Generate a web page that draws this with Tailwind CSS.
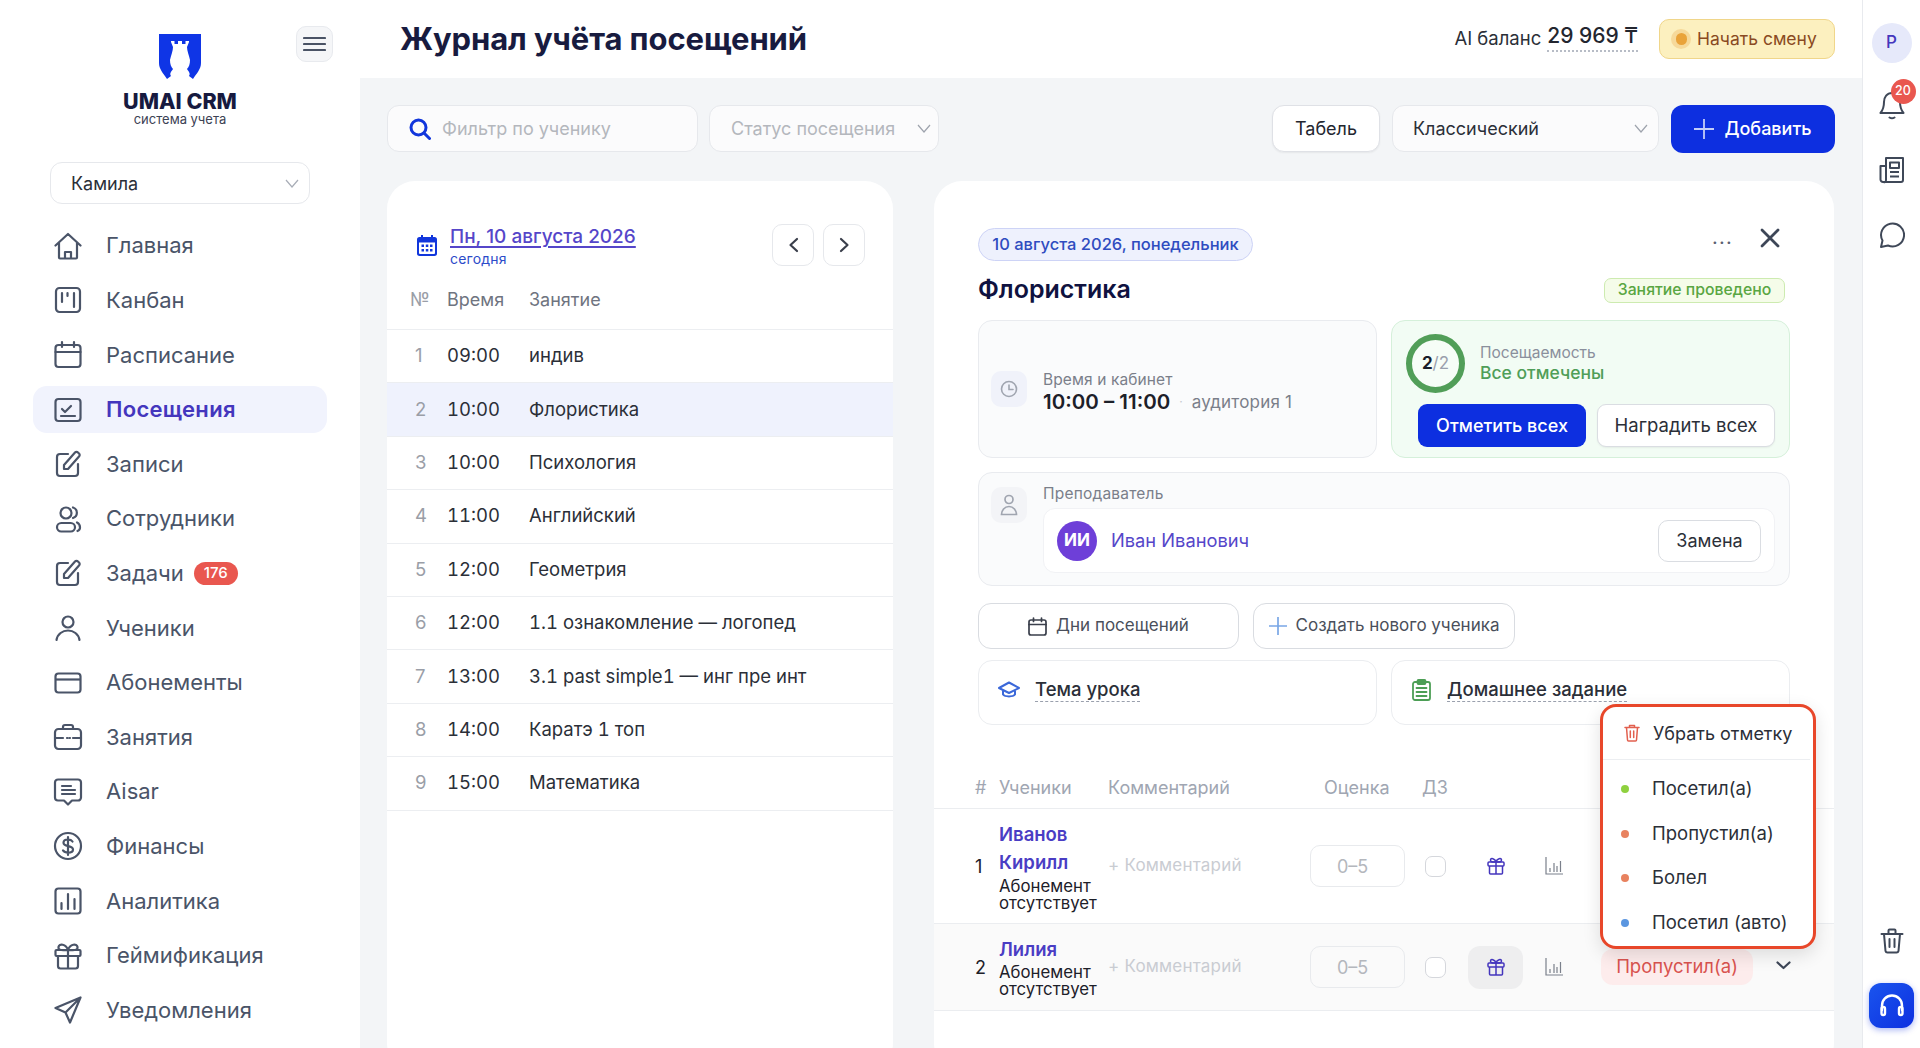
<!DOCTYPE html>
<html lang="ru">
<head>
<meta charset="utf-8">
<title>Журнал учёта посещений</title>
<script src="https://cdn.jsdelivr.net/npm/@tailwindcss/browser@4"></script>
</head>
<body class="font-[Inter,sans-serif] text-[#1f2430] bg-white">
<div class="flex w-[1920px] h-[1048px] overflow-hidden relative">

  <!-- SIDEBAR -->
  <aside class="w-[360px] shrink-0 bg-white relative">
    <div class="h-[162px] relative">
      <button class="absolute left-[296px] top-[26px] w-[37px] h-[36px] rounded-[10px] border border-[#e8eaee] bg-[#f5f6f8] flex items-center justify-center">
        <svg width="23" height="16" viewBox="0 0 23 16" fill="none" stroke="#4a5365" stroke-width="2.2" stroke-linecap="round"><path d="M1 2h21M1 8h21M1 14h21"/></svg>
      </button>
      <div class="flex flex-col items-center pt-[34px]">
        <svg width="44" height="46" viewBox="0 0 44 46">
          <path fill="#0f35e6" d="M1 0H43V29C43 35 39 39 35 45L31 42C33 39 30 37 29 35C31 33 32 30 32 26C31 21 29 17 29 13L31 8V7H27.500V10H24V7H20V10H16.500V7H13V8L15 13C15 17 13 21 12 26C12 30 13 33 15 35C14 37 11 39 13 42L9 45C5 39 1 35 1 29Z"/>
        </svg>
        <div class="text-[21.500px] leading-[20px] font-extrabold text-[#171a3f] mt-[11px]">UMAI CRM</div>
        <div class="text-[13px] leading-[14px] text-[#3c4254] mt-[1px]">система учета</div>
      </div>
    </div>

    <div class="mx-[50px] h-[42px] rounded-[12px] border border-[#e6e8ec] flex items-center justify-between pl-[20px] pr-[10px] text-[18px] text-[#2b2f38]">
      <span>Камила</span>
      <svg width="14" height="9" viewBox="0 0 14 9" fill="none" stroke="#a8adb7" stroke-width="1.200"><path d="M1 1l6 7 6-7"/></svg>
    </div>

    <nav class="mt-[14.600px] px-[33px] flex flex-col text-[22px] text-[#4a5468]">
      <a class="h-[54.600px] flex items-center gap-[23px] pl-[20px]">
        <svg class="w-[30px] h-[30px] shrink-0" viewBox="0 0 30 30" fill="none" stroke="#4a5468" stroke-width="2.200" stroke-linejoin="round" stroke-linecap="round"><path d="M2.500 14.500 15 3l12.500 11.500M6 12v14.500a1 1 0 0 0 1 1h16a1 1 0 0 0 1-1V12M12 27v-6h6v6"/></svg>
        <span>Главная</span>
      </a>
      <a class="h-[54.600px] flex items-center gap-[23px] pl-[20px]">
        <svg class="w-[30px] h-[30px] shrink-0" viewBox="0 0 30 30" fill="none" stroke="#4a5468" stroke-width="2.200" stroke-linecap="round"><rect x="3" y="3" width="24" height="24" rx="3.500"/><path d="M9 8v9M14.500 8v3M21 8v14"/></svg>
        <span>Канбан</span>
      </a>
      <a class="h-[54.600px] flex items-center gap-[23px] pl-[20px]">
        <svg class="w-[30px] h-[30px] shrink-0" viewBox="0 0 30 30" fill="none" stroke="#4a5468" stroke-width="2.200" stroke-linecap="round"><rect x="2.500" y="5" width="25" height="22" rx="3"/><path d="M2.500 12h25M9 2v5M21 2v5"/></svg>
        <span>Расписание</span>
      </a>
      <a class="h-[47px] my-[3.800px] flex items-center gap-[23px] pl-[20px] rounded-[14px] bg-[#f1f3fd] text-[#4436bd] font-semibold tracking-[0.3px]">
        <svg class="w-[30px] h-[30px] shrink-0" viewBox="0 0 30 30" fill="none" stroke="#4a5468" stroke-width="2.200" stroke-linecap="round" stroke-linejoin="round"><rect x="2.500" y="4" width="25" height="22" rx="3"/><path d="M9 14l3 3 6-6M8 21h14"/></svg>
        <span>Посещения</span>
      </a>
      <a class="h-[54.600px] flex items-center gap-[23px] pl-[20px]">
        <svg class="w-[30px] h-[30px] shrink-0" viewBox="0 0 30 30" fill="none" stroke="#4a5468" stroke-width="2.200" stroke-linecap="round" stroke-linejoin="round"><path d="M15 5H7a3 3 0 0 0-3 3v16a3 3 0 0 0 3 3h15a3 3 0 0 0 3-3v-9"/><path d="M11 20v-4L22 3.500a2 2 0 0 1 3 0l1 1a2 2 0 0 1 0 3L15 20z"/></svg>
        <span>Записи</span>
      </a>
      <a class="h-[54.600px] flex items-center gap-[23px] pl-[20px]">
        <svg class="w-[30px] h-[30px] shrink-0" viewBox="0 0 30 30" fill="none" stroke="#4a5468" stroke-width="2.200" stroke-linecap="round"><circle cx="13" cy="9" r="5.500"/><rect x="4" y="19" width="18" height="8.500" rx="4.250"/><path d="M20 3.500a5.500 5.500 0 0 1 0 10.500M24 18.500c2 1 3 3 3 5s-1 3-2.500 3.500"/></svg>
        <span>Сотрудники</span>
      </a>
      <a class="h-[54.600px] flex items-center gap-[23px] pl-[20px]">
        <svg class="w-[30px] h-[30px] shrink-0" viewBox="0 0 30 30" fill="none" stroke="#4a5468" stroke-width="2.200" stroke-linecap="round" stroke-linejoin="round"><path d="M15 5H7a3 3 0 0 0-3 3v16a3 3 0 0 0 3 3h15a3 3 0 0 0 3-3v-9"/><path d="M11 20v-4L22 3.500a2 2 0 0 1 3 0l1 1a2 2 0 0 1 0 3L15 20z"/></svg>
        <span>Задачи</span>
        <span class="-ml-[13px] h-[23px] w-[44px] rounded-full bg-[#e9574f] text-white text-[15px] font-medium flex items-center justify-center">176</span>
      </a>
      <a class="h-[54.600px] flex items-center gap-[23px] pl-[20px]">
        <svg class="w-[30px] h-[30px] shrink-0" viewBox="0 0 30 30" fill="none" stroke="#4a5468" stroke-width="2.200" stroke-linecap="round"><circle cx="15" cy="9" r="5.500"/><path d="M3.500 27c1-6 6-9.500 11.500-9.500S25.500 21 26.500 27"/></svg>
        <span>Ученики</span>
      </a>
      <a class="h-[54.600px] flex items-center gap-[23px] pl-[20px]">
        <svg class="w-[30px] h-[30px] shrink-0" viewBox="0 0 30 30" fill="none" stroke="#4a5468" stroke-width="2.200"><rect x="2.500" y="5.500" width="25" height="19" rx="3"/><path d="M2.500 11.500h25"/></svg>
        <span>Абонементы</span>
      </a>
      <a class="h-[54.600px] flex items-center gap-[23px] pl-[20px]">
        <svg class="w-[30px] h-[30px] shrink-0" viewBox="0 0 30 30" fill="none" stroke="#4a5468" stroke-width="2.200" stroke-linecap="round"><rect x="2" y="7" width="26" height="20" rx="3.500"/><path d="M10 7V5a2 2 0 0 1 2-2h6a2 2 0 0 1 2 2v2M2 16h8M20 16h8M14 16h.5M16.500 16h.5"/></svg>
        <span>Занятия</span>
      </a>
      <a class="h-[54.600px] flex items-center gap-[23px] pl-[20px]">
        <svg class="w-[30px] h-[30px] shrink-0" viewBox="0 0 30 30" fill="none" stroke="#4a5468" stroke-width="2.200" stroke-linecap="round" stroke-linejoin="round"><path d="M5 2.500h20a3 3 0 0 1 3 3v15a3 3 0 0 1-3 3h-6l-4 4-4-4H5a3 3 0 0 1-3-3v-15a3 3 0 0 1 3-3z"/><path d="M9 9h9M9 13h13M9 17h13"/></svg>
        <span>Aisar</span>
      </a>
      <a class="h-[54.600px] flex items-center gap-[23px] pl-[20px]">
        <svg class="w-[30px] h-[30px] shrink-0" viewBox="0 0 30 30" fill="none" stroke="#4a5468" stroke-width="2.200" stroke-linecap="round"><circle cx="15" cy="15" r="13"/><path d="M19.500 10.500c-1-1.500-2.500-2-4.500-2-2.500 0-4.500 1.300-4.500 3.300 0 4.700 9.500 2 9.500 6.700 0 2-2 3.200-5 3.200-2.300 0-4-.8-5-2.300M15 6v18"/></svg>
        <span>Финансы</span>
      </a>
      <a class="h-[54.600px] flex items-center gap-[23px] pl-[20px]">
        <svg class="w-[30px] h-[30px] shrink-0" viewBox="0 0 30 30" fill="none" stroke="#4a5468" stroke-width="2.200" stroke-linecap="round"><rect x="2.500" y="2.500" width="25" height="25" rx="3"/><path d="M8.500 17v6M15 8v15M21.500 13v10"/></svg>
        <span>Аналитика</span>
      </a>
      <a class="h-[54.600px] flex items-center gap-[23px] pl-[20px]">
        <svg class="w-[30px] h-[30px] shrink-0" viewBox="0 0 30 30" fill="none" stroke="#4a5468" stroke-width="2.200" stroke-linecap="round" stroke-linejoin="round"><rect x="2.500" y="9" width="25" height="6" rx="1"/><path d="M5 15v10a2.500 2.500 0 0 0 2.500 2.500h15A2.500 2.500 0 0 0 25 25V15M15 9v18.500M15 9c-2-6-9-7-9.500-3S9 9 15 9zM15 9c2-6 9-7 9.500-3S21 9 15 9z"/></svg>
        <span>Геймификация</span>
      </a>
      <a class="h-[54.600px] flex items-center gap-[23px] pl-[20px]">
        <svg class="w-[30px] h-[30px] shrink-0" viewBox="0 0 30 30" fill="none" stroke="#4a5468" stroke-width="2.200" stroke-linecap="round" stroke-linejoin="round"><path d="M27.500 2.500 2.500 13l10 4.500 4.500 10zM12.500 17.500l15-15"/></svg>
        <span>Уведомления</span>
      </a>
    </nav>
  </aside>

  <!-- MAIN -->
  <main class="flex-1 flex flex-col min-w-0 bg-[#f3f5f7]">
    <header class="h-[78px] shrink-0 bg-white flex items-center justify-between pl-[40px] pr-[27px]">
      <h1 class="text-[31px] font-bold text-[#181b3f] tracking-[-0.1px]">Журнал учёта посещений</h1>
      <div class="flex items-center">
        <span class="text-[18.500px] text-[#2b2f38]">AI баланс</span>
        <span class="ml-[6px] text-[21px] font-medium text-[#23262f] border-b-2 border-dotted border-[#b7bcc6] leading-[26px] pb-[1px] -mt-[4px]">29 969 ₸</span>
        <button class="ml-[21px] w-[176px] h-[40px] rounded-[10px] border border-[#f0d68a] bg-[#fcf0bf] flex items-center pl-[11px] gap-[6px] text-[17.500px] text-[#8a4a22]">
          <span class="w-[20px] h-[20px] rounded-full bg-[#f6d99a] flex items-center justify-center"><span class="w-[11px] h-[12px] rounded-full bg-[#e9a33a]"></span></span>
          <span>Начать смену</span>
        </button>
      </div>
    </header>

    <div class="flex-1 min-h-0 pl-[27px] pr-[27px] pt-[27px] flex flex-col">
      <div class="flex items-center h-[47px] shrink-0">
        <div class="w-[311px] h-[47px] rounded-[12px] border border-[#e6e8ec] bg-[#fbfbfc] flex items-center pl-[21px] text-[18px] text-[#b4b7bd]">
          <svg class="mr-[11px]" width="22" height="22" viewBox="0 0 22 22" fill="none" stroke="#1136dc" stroke-width="3" stroke-linecap="round"><circle cx="9.500" cy="9.500" r="7.500"/><path d="M15 15l5.500 5.500"/></svg>
          <span>Фильтр по ученику</span>
        </div>
        <div class="ml-[11px] w-[230px] h-[47px] rounded-[12px] border border-[#e6e8ec] bg-[#fbfbfc] flex items-center justify-between pl-[21px] pr-[7px] text-[18px] text-[#b4b7bd]">
          <span>Статус посещения</span>
          <svg width="14" height="9" viewBox="0 0 14 9" fill="none" stroke="#9ea3ad" stroke-width="1.200"><path d="M1 1l6 7 6-7"/></svg>
        </div>
        <div class="flex-1"></div>
        <button class="w-[108px] h-[47px] rounded-[12px] border border-[#dfe1e6] bg-white text-[18px] text-[#23262f] shadow-[0_1px_2px_rgba(0,0,0,0.06)]">Табель</button>
        <div class="ml-[12px] w-[267px] h-[47px] rounded-[12px] border border-[#e6e8ec] bg-[#fbfbfc] flex items-center justify-between pl-[20px] pr-[10px] text-[18px] text-[#2b2f38]">
          <span>Классический</span>
          <svg width="14" height="9" viewBox="0 0 14 9" fill="none" stroke="#9ea3ad" stroke-width="1.200"><path d="M1 1l6 7 6-7"/></svg>
        </div>
        <button class="ml-[12px] w-[164px] h-[48px] rounded-[12px] bg-[#0d2fe0] text-white text-[18px] font-medium flex items-center justify-center gap-[10px]">
          <svg width="20" height="20" viewBox="0 0 20 20" fill="none" stroke="#c3cdf8" stroke-width="1.800"><path d="M10 0v20M0 10h20"/></svg>
          <span>Добавить</span>
        </button>
      </div>

      <div class="mt-[29px] flex gap-[41px] flex-1 min-h-0">
        <!-- LEFT CARD -->
        <section class="w-[506px] shrink-0 h-[890px] bg-white rounded-[28px]">
          <div class="h-[149px] relative">
            <div class="flex items-start pt-[43px] pl-[30px]">
              <svg class="mt-[11px]" width="20" height="21" viewBox="0 0 20 21"><path fill="#1136dc" d="M4 0h2v2h8V0h2v2h1.500A2.500 2.500 0 0 1 20 4.500v14a2.500 2.500 0 0 1-2.500 2.500h-15A2.500 2.500 0 0 1 0 18.500v-14A2.500 2.500 0 0 1 2.500 2H4z"/><path fill="#fff" d="M2 7.500h16V18a1 1 0 0 1-1 1H3a1 1 0 0 1-1-1z"/><path fill="#1136dc" d="M4.500 9.500h2.500V12H4.500zM8.800 9.500h2.500V12H8.800zM13 9.500h2.500V12H13zM4.500 14h2.500v2.500H4.500zM8.800 14h2.500v2.500H8.800zM13 14h2.500v2.500H13z"/></svg>
              <div class="ml-[13px]">
                <div class="text-[19px] leading-[26px] font-medium text-[#5546c9] underline underline-offset-[3px] decoration-[1.500px]">Пн, 10 августа 2026</div>
                <div class="text-[14px] leading-[16px] text-[#2c4bc9] mt-[1px] tracking-[0.2px]">сегодня</div>
              </div>
            </div>
            <button class="absolute left-[385px] top-[43px] w-[42px] h-[42px] rounded-[10px] border border-[#e6e8ec] flex items-center justify-center">
              <svg width="11" height="16" viewBox="0 0 11 16" fill="none" stroke="#3a3f4b" stroke-width="2.200" stroke-linecap="round" stroke-linejoin="round"><path d="M9 2 2.500 8 9 14"/></svg>
            </button>
            <button class="absolute left-[436px] top-[43px] w-[42px] h-[42px] rounded-[10px] border border-[#e6e8ec] flex items-center justify-center">
              <svg width="11" height="16" viewBox="0 0 11 16" fill="none" stroke="#3a3f4b" stroke-width="2.200" stroke-linecap="round" stroke-linejoin="round"><path d="M2 2l6.500 6L2 14"/></svg>
            </button>
            <div class="absolute left-0 right-0 bottom-0 h-[48px] pb-[12px] flex items-center border-b border-[#eceef1] text-[18px] text-[#6f7480]">
              <span class="w-[60px] pl-[23px] text-[#9a9ea7]">№</span>
              <span class="w-[83px]">Время</span>
              <span class="-ml-[1px]">Занятие</span>
            </div>
          </div>
          <div class="text-[18.500px] text-[#2b2f38]">
            <div class="h-[53.400px] flex items-center border-b border-[#eceef1]"><span class="w-[60px] pl-[28px] text-[#9a9ea7]">1</span><span class="w-[82px] tabular-nums">09:00</span><span>индив</span></div>
            <div class="h-[53.400px] flex items-center border-b border-[#eceef1] bg-[#eff2fd]"><span class="w-[60px] pl-[28px] text-[#9a9ea7]">2</span><span class="w-[82px] tabular-nums">10:00</span><span>Флористика</span></div>
            <div class="h-[53.400px] flex items-center border-b border-[#eceef1]"><span class="w-[60px] pl-[28px] text-[#9a9ea7]">3</span><span class="w-[82px] tabular-nums">10:00</span><span>Психология</span></div>
            <div class="h-[53.400px] flex items-center border-b border-[#eceef1]"><span class="w-[60px] pl-[28px] text-[#9a9ea7]">4</span><span class="w-[82px] tabular-nums">11:00</span><span>Английский</span></div>
            <div class="h-[53.400px] flex items-center border-b border-[#eceef1]"><span class="w-[60px] pl-[28px] text-[#9a9ea7]">5</span><span class="w-[82px] tabular-nums">12:00</span><span>Геометрия</span></div>
            <div class="h-[53.400px] flex items-center border-b border-[#eceef1]"><span class="w-[60px] pl-[28px] text-[#9a9ea7]">6</span><span class="w-[82px] tabular-nums">12:00</span><span class="tabular-nums">1.1 ознакомление — логопед</span></div>
            <div class="h-[53.400px] flex items-center border-b border-[#eceef1]"><span class="w-[60px] pl-[28px] text-[#9a9ea7]">7</span><span class="w-[82px] tabular-nums">13:00</span><span class="tabular-nums">3.1 past simple1 — инг пре инт</span></div>
            <div class="h-[53.400px] flex items-center border-b border-[#eceef1]"><span class="w-[60px] pl-[28px] text-[#9a9ea7]">8</span><span class="w-[82px] tabular-nums">14:00</span><span class="tabular-nums">Каратэ 1 топ</span></div>
            <div class="h-[53.400px] flex items-center border-b border-[#eceef1]"><span class="w-[60px] pl-[28px] text-[#9a9ea7]">9</span><span class="w-[82px] tabular-nums">15:00</span><span>Математика</span></div>
          </div>
        </section>

        <!-- RIGHT CARD -->
        <section class="w-[900px] shrink-0 h-[890px] bg-white rounded-[28px] relative">
          <div class="pl-[44px] pr-[44px] pt-[47px]">
            <div class="flex items-start justify-between h-[33px]">
              <span class="h-[33px] w-[275px] rounded-full border border-[#cdd3f6] bg-[#eef1fd] flex items-center justify-center text-[16.500px] font-medium text-[#2f4cc0]">10 августа 2026, понедельник</span>
              <div class="flex items-start mr-[2px]">
                <span class="text-[20px] leading-none text-[#5a6070] tracking-[1.200px] mt-[-1px]">...</span>
                <svg class="ml-[27px] mr-[8px]" width="20" height="20" viewBox="0 0 20 20" fill="none" stroke="#3d4657" stroke-width="2.800" stroke-linecap="round"><path d="M2 2l16 16M18 2 2 18"/></svg>
              </div>
            </div>
            <div class="flex items-center justify-between h-[36px] mt-[11px]">
              <h2 class="text-[25px] font-semibold text-[#0f1240]">Флористика</h2>
              <span class="h-[25px] w-[181px] mr-[5px] rounded-[7px] border border-[#cdebb0] bg-[#f5fce9] flex items-center justify-center text-[15.800px] font-medium text-[#59a642]">Занятие проведено</span>
            </div>

            <div class="grid grid-cols-2 gap-[14px] mt-[12px]">
              <div class="h-[138px] rounded-[14px] border border-[#e9ebef] bg-[#fafbfc] flex items-center pl-[12px]">
                <div class="w-[36px] h-[36px] rounded-[10px] bg-[#f0f2fa] flex items-center justify-center">
                  <svg width="18" height="18" viewBox="0 0 18 18" fill="none" stroke="#a0a5b0" stroke-width="1.600" stroke-linecap="round"><circle cx="9" cy="9" r="7.500"/><path d="M9 5v4.500h4"/></svg>
                </div>
                <div class="ml-[16px] pt-[5px]">
                  <div class="text-[15.500px] leading-[19px] text-[#7a7f8a] tracking-[0.1px]">Время и кабинет</div>
                  <div class="flex items-center leading-[24px] mt-[1px]">
                    <span class="text-[20.500px] font-semibold text-[#1d2029]">10:00 – 11:00</span>
                    <span class="text-[#c5c8ce] text-[12px] mx-[9px]">·</span>
                    <span class="text-[17px] text-[#7a7f8a] tracking-[0.2px]">аудитория 1</span>
                  </div>
                </div>
              </div>
              <div class="h-[138px] rounded-[14px] border border-[#d5f0da] bg-[#f2fcf4] px-[14px] pt-[13px]">
                <div class="flex items-center">
                  <div class="w-[59px] h-[59px] rounded-full border-[6px] border-[#519e58] flex items-center justify-center bg-white/30 text-[17px]">
                    <b class="font-bold text-[#1a1d2a]">2</b><span class="text-[#9aa0ad] font-normal">/2</span>
                  </div>
                  <div class="ml-[15px]">
                    <div class="text-[15.500px] leading-[19px] text-[#8a8f9c]">Посещаемость</div>
                    <div class="text-[17.500px] leading-[22px] font-medium text-[#4f9e58]">Все отмечены</div>
                  </div>
                </div>
                <div class="flex gap-[11px] mt-[11px] pl-[12px]">
                  <button class="w-[169px] h-[43px] rounded-[9px] bg-[#0d2fe0] text-white text-[18px] font-medium">Отметить всех</button>
                  <button class="w-[179px] h-[43px] rounded-[9px] border border-[#dadde2] bg-white text-[18.500px] text-[#2b2f38] shadow-[0_1px_2px_rgba(0,0,0,0.06)]">Наградить всех</button>
                </div>
              </div>
            </div>

            <div class="h-[114px] mt-[14px] rounded-[14px] border border-[#e9ebef] bg-[#fafbfc] flex pl-[12px] pr-[14px] pt-[14px]">
              <div class="w-[36px] h-[36px] rounded-[10px] bg-[#f3f4f7] flex items-center justify-center shrink-0">
                <svg width="18" height="22" viewBox="0 0 18 22" fill="none" stroke="#a0a5b0" stroke-width="1.700" stroke-linecap="round"><circle cx="9" cy="5.500" r="4"/><path d="M1.500 20.500c0-4 3-8 7.500-8s7.500 4 7.500 8zM1.500 20.500h15"/></svg>
              </div>
              <div class="ml-[16px] flex-1 -mt-[3px]">
                <div class="text-[15.500px] leading-[19px] text-[#7a7f8a] tracking-[0.2px]">Преподаватель</div>
                <div class="mt-[5px] h-[65px] rounded-[12px] border border-[#f1f2f5] bg-white flex items-center justify-between pl-[13px] pr-[13px]">
                  <div class="flex items-center">
                    <span class="w-[40px] h-[40px] rounded-full bg-[#6e3fd8] text-white text-[17px] font-bold flex items-center justify-center">ИИ</span>
                    <span class="ml-[14px] text-[18.300px] text-[#5546c9]">Иван Иванович</span>
                  </div>
                  <button class="w-[103px] h-[42px] rounded-[10px] border border-[#dadde2] bg-white text-[18px] text-[#2b2f38]">Замена</button>
                </div>
              </div>
            </div>

            <div class="flex gap-[14px] mt-[17px]">
              <button class="w-[261px] h-[46px] rounded-[13px] border border-[#d9dce1] bg-white flex items-center justify-center gap-[9px] text-[17px] text-[#4a4f5b]">
                <svg width="19" height="19" viewBox="0 0 19 19" fill="none" stroke="#3a3f4b" stroke-width="1.700" stroke-linecap="round"><rect x="1" y="3" width="17" height="15" rx="2"/><path d="M1 7.500h17M5.500 1v3.500M13.500 1v3.500"/></svg>
                <span>Дни посещений</span>
              </button>
              <button class="w-[262px] h-[46px] rounded-[13px] border border-[#d9dce1] bg-white flex items-center justify-center gap-[9px] text-[17px] text-[#4a4f5b]">
                <svg width="18" height="18" viewBox="0 0 18 18" fill="none" stroke="#7aa7e6" stroke-width="1.700"><path d="M9 0v18M0 9h18"/></svg>
                <span>Создать нового ученика</span>
              </button>
            </div>

            <div class="grid grid-cols-2 gap-[14px] mt-[11px]">
              <div class="h-[65px] rounded-[14px] border border-[#ebedf0] flex items-center pl-[19px] pb-[5px]">
                <svg width="22" height="18" viewBox="0 0 22 18" fill="none" stroke="#3b68d9" stroke-width="2" stroke-linejoin="round"><path d="M11 1.500 1 7l10 5 10-5z"/><path d="M5 9.500v4c2 2.500 10 2.500 12 0v-4"/></svg>
                <span class="ml-[15px] text-[18.500px] font-medium text-[#2b2f38] border-b border-dashed border-[#9aa0ad] leading-[23px]">Тема урока</span>
              </div>
              <div class="h-[65px] rounded-[14px] border border-[#ebedf0] flex items-center pl-[20px] pb-[5px]">
                <svg width="19" height="22" viewBox="0 0 19 22" fill="none" stroke="#4c9e55" stroke-width="1.800" stroke-linecap="round"><rect x="1" y="3" width="17" height="18" rx="2"/><rect x="5.500" y="1" width="8" height="4" rx="1"/><path d="M4.500 9h10M4.500 13h10M4.500 17h10"/></svg>
                <span class="ml-[16px] text-[18.500px] font-medium text-[#2b2f38] border-b border-dashed border-[#9aa0ad] leading-[23px]">Домашнее задание</span>
              </div>
            </div>
          </div>

          <!-- students table -->
          <div class="mt-[52px] text-[18px]">
            <div class="h-[36px] border-b border-[#ebedf0] flex items-start pl-[41px] text-[#a0a6b2] -mt-[4px] pt-[1px]">
              <span class="w-[24px]">#</span>
              <span class="w-[109px]">Ученики</span>
              <span class="w-[216px]">Комментарий</span>
              <span class="w-[98px]">Оценка</span>
              <span>ДЗ</span>
            </div>
            <div class="h-[115px] border-b border-[#ebedf0] flex items-center pl-[41px]">
              <span class="w-[24px] text-[18px] text-[#1d2029]">1</span>
              <div class="w-[109px]">
                <div class="text-[18.500px] leading-[28px] font-semibold text-[#4a3dc4] w-[80px]">Иванов Кирилл</div>
                <div class="text-[16.800px] leading-[17.500px] text-[#1d2029] mt-[2px]">Абонемент отсутствует</div>
              </div>
              <span class="w-[202px] text-[17px] text-[#c9ccd2] tracking-[0.2px]">+ Комментарий</span>
              <div class="w-[95px] h-[42px] rounded-[10px] border border-[#e8eaed] flex items-center text-[18px] text-[#b4b7bd] pl-[26px]">0–5</div>
              <span class="ml-[20px] w-[21px] h-[21px] rounded-[7px] border border-[#d5d7dc] bg-white"></span>
              <span class="ml-[22px] w-[55px] h-[43px] rounded-[12px] flex items-center justify-center">
                <svg width="18" height="18" viewBox="0 0 18 18" fill="none" stroke="#4436bd" stroke-width="1.500" stroke-linejoin="round"><rect x="1" y="5" width="16" height="4" rx="1"/><path d="M2.500 9v7a1 1 0 0 0 1 1h11a1 1 0 0 0 1-1V9M9 5v12M9 5C8 1.500 3.500.5 3.500 3S6 5 9 5zM9 5c1-3.500 5.500-4.500 5.500-2S12 5 9 5z"/></svg>
              </span>
              <span class="ml-[22px] w-[18px] h-[18px] flex">
                <svg width="18" height="18" viewBox="0 0 18 18" fill="none" stroke="#7b808b" stroke-width="1.200"><path d="M1 0v17h17M5 11v4M9 6v9M12 9v6M15.500 4v11"/></svg>
              </span>
            </div>
            <div class="h-[87px] border-b border-[#ebedf0] bg-[#fafafa] flex items-center pl-[41px]">
              <span class="w-[24px] text-[18px] text-[#1d2029]">2</span>
              <div class="w-[109px]">
                <div class="text-[18.500px] leading-[26px] font-semibold text-[#4a3dc4]">Лилия</div>
                <div class="text-[16.800px] leading-[17.500px] text-[#1d2029] mt-[2px]">Абонемент отсутствует</div>
              </div>
              <span class="w-[202px] text-[17px] text-[#c9ccd2] tracking-[0.2px]">+ Комментарий</span>
              <div class="w-[95px] h-[42px] rounded-[10px] border border-[#e8eaed] flex items-center text-[18px] text-[#b4b7bd] pl-[26px]">0–5</div>
              <span class="ml-[20px] w-[21px] h-[21px] rounded-[7px] border border-[#d5d7dc] bg-white"></span>
              <span class="ml-[22px] w-[55px] h-[43px] rounded-[12px] bg-[#eeeeef] flex items-center justify-center">
                <svg width="18" height="18" viewBox="0 0 18 18" fill="none" stroke="#4436bd" stroke-width="1.500" stroke-linejoin="round"><rect x="1" y="5" width="16" height="4" rx="1"/><path d="M2.500 9v7a1 1 0 0 0 1 1h11a1 1 0 0 0 1-1V9M9 5v12M9 5C8 1.500 3.500.5 3.500 3S6 5 9 5zM9 5c1-3.500 5.500-4.500 5.500-2S12 5 9 5z"/></svg>
              </span>
              <span class="ml-[22px] w-[18px] h-[18px] flex">
                <svg width="18" height="18" viewBox="0 0 18 18" fill="none" stroke="#7b808b" stroke-width="1.200"><path d="M1 0v17h17M5 11v4M9 6v9M12 9v6M15.500 4v11"/></svg>
              </span>
              <span class="ml-[38px] w-[152px] h-[36px] rounded-[12px] bg-[#fdecec] text-[18.500px] text-[#d9534f] flex items-center justify-center">Пропустил(а)</span>
              <svg class="ml-[23px] -mt-[4px]" width="15" height="9" viewBox="0 0 15 9" fill="none" stroke="#3d4657" stroke-width="2.200" stroke-linecap="round" stroke-linejoin="round"><path d="M1.500 1.500 7.500 7l6-5.500"/></svg>
            </div>
          </div>
        </section>
      </div>
    </div>
  </main>

  <!-- RIGHT RAIL -->
  <aside class="w-[58px] shrink-0 border-l border-[#e8eaee] bg-white flex flex-col items-center relative">
    <span class="mt-[23px] w-[40px] h-[40px] rounded-full bg-[#e6e9fa] text-[#4436bd] text-[17px] font-medium flex items-center justify-center">Р</span>
    <div class="relative mt-[27px] w-[26px] h-[30px]">
      <svg width="26" height="30" viewBox="0 0 26 30" fill="none" stroke="#3f4858" stroke-width="2" stroke-linecap="round" stroke-linejoin="round"><path d="M13 3C8 3 5 7 5 12c0 5-1 8-3.500 11h23C22 20 21 17 21 12c0-5-3-9-8-9zM10.500 27.500c1.500 1 3.500 1 5 0"/></svg>
      <span class="absolute -top-[11px] left-[12px] w-[25px] h-[25px] rounded-full bg-[#e9574f] text-white text-[12.500px] font-medium flex items-center justify-center">20</span>
    </div>
    <svg class="mt-[36px]" width="26" height="28" viewBox="0 0 26 28" fill="none" stroke="#3f4858" stroke-width="2" stroke-linejoin="round"><path d="M7 2h17v22a2 2 0 0 1-2 2H4a2.500 2.500 0 0 1-2.500-2.500V10H7zM7 10v14a2 2 0 0 1-3 2"/><rect x="11" y="6.500" width="9" height="5.500"/><path d="M11 16h9M11 20.500h9"/></svg>
    <svg class="mt-[37px]" width="26" height="28" viewBox="0 0 26 28" fill="none" stroke="#3f4858" stroke-width="2" stroke-linecap="round" stroke-linejoin="round"><path d="M2 26l1.500-6.500A11.500 11.500 0 1 1 9 24.500z"/></svg>
    <div class="flex-1"></div>
    <svg width="24" height="26" viewBox="0 0 24 26" fill="none" stroke="#3f4858" stroke-width="2" stroke-linecap="round" stroke-linejoin="round"><path d="M1.500 6h21M8.500 6V2.500a1 1 0 0 1 1-1h5a1 1 0 0 1 1 1V6M4 6l1.500 17a2 2 0 0 0 2 1.500h9a2 2 0 0 0 2-1.500L20 6M9.500 11v8M14.500 11v8"/></svg>
    <button class="mt-[29px] mb-[20px] w-[45px] h-[45px] rounded-[12px] bg-[linear-gradient(135deg,#1a55ee,#0d2fe0)] shadow-[0_2px_6px_rgba(13,47,224,0.35)] flex items-center justify-center">
      <svg width="26" height="26" viewBox="0 0 26 26" fill="none" stroke="#fff" stroke-width="2.400" stroke-linecap="round"><path d="M3 17v-4.500a10 10 0 0 1 20 0V17"/><rect x="2.500" y="14" width="3.500" height="8" rx="1.700"/><rect x="20" y="14" width="3.500" height="8" rx="1.700"/></svg>
    </button>
  </aside>

  <!-- STATUS MENU -->
  <div class="absolute left-[1600px] top-[704px] w-[216px] h-[245px] rounded-[16px] border-[3px] border-[#e8472a] bg-white shadow-[0_6px_18px_rgba(0,0,0,0.12)] text-[18.500px] text-[#2b2f38]">
    <div class="h-[53px] flex items-center pl-[21px] gap-[13px] border-b border-[#eceef1] mx-[3px] -ml-0">
      <svg width="16" height="18" viewBox="0 0 16 18" fill="none" stroke="#e2604f" stroke-width="1.500" stroke-linecap="round" stroke-linejoin="round"><path d="M1 3.500h14M5.500 3.500V1.500h5v2M2.500 3.500l1 12.500a1 1 0 0 0 1 1h7a1 1 0 0 0 1-1l1-12.500M6.300 7v6.500M9.700 7v6.500"/></svg>
      <span class="text-[18px]">Убрать отметку</span>
    </div>
    <div class="pt-[7px] flex flex-col">
      <div class="h-[44.500px] flex items-center pl-[18px] gap-[23px]"><span class="w-[8px] h-[8px] rounded-full bg-[#8fd13f]"></span><span>Посетил(а)</span></div>
      <div class="h-[44.500px] flex items-center pl-[18px] gap-[23px]"><span class="w-[8px] h-[8px] rounded-full bg-[#e8825f]"></span><span>Пропустил(а)</span></div>
      <div class="h-[44.500px] flex items-center pl-[18px] gap-[23px]"><span class="w-[8px] h-[8px] rounded-full bg-[#e8825f]"></span><span>Болел</span></div>
      <div class="h-[44.500px] flex items-center pl-[18px] gap-[23px]"><span class="w-[8px] h-[8px] rounded-full bg-[#5b96e0]"></span><span>Посетил (авто)</span></div>
    </div>
  </div>
</div>
</body>
</html>
